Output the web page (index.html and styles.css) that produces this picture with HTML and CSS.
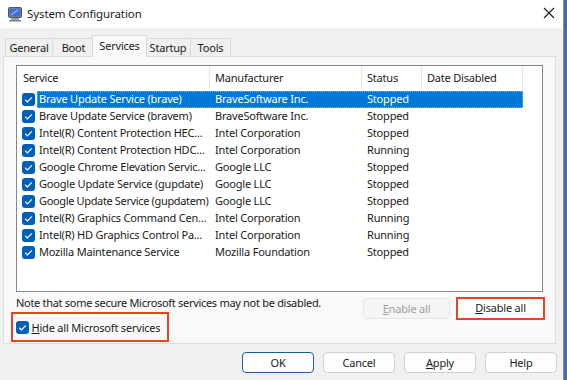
FILE: index.html
```html
<!DOCTYPE html>
<html>
<head>
<meta charset="utf-8">
<link rel="stylesheet" href="styles.css">
</head>
<body>
<div class="window">
  <div class="titlebar">
    <svg class="app-icon" width="16" height="16" viewBox="0 0 16 16">
      <rect x="1.5" y="1.5" width="13" height="10" rx="1" fill="#6f7f99" stroke="#4a5670"/>
      <rect x="3" y="3" width="10" height="7" fill="#3d6fd6"/>
      <path d="M4 9 L11 4" stroke="#c8dcff" stroke-width="1"/>
      <rect x="4" y="12" width="8" height="2.5" fill="#9aa3b0"/>
      <rect x="2" y="14" width="12" height="1.5" fill="#7a8290"/>
    </svg>
    <span class="title">System Configuration</span>
    <svg class="close" width="12" height="12" viewBox="0 0 12 12">
      <path d="M1 1 L11 11 M11 1 L1 11" stroke="#1a1a1a" stroke-width="1.1"/>
    </svg>
  </div>
  <div class="body">
    <div class="tabs">
      <div class="tab t-general">General</div>
      <div class="tab t-boot">Boot</div>
      <div class="tab t-services active">Services</div>
      <div class="tab t-startup">Startup</div>
      <div class="tab t-tools">Tools</div>
    </div>
    <div class="panel">
      <div class="listview">
        <div class="lv-header">
          <div class="h h1">Service</div>
          <div class="h h2">Manufacturer</div>
          <div class="h h3">Status</div>
          <div class="h h4">Date Disabled</div>
        </div>
        <div class="lv-row selected">
          <span class="cb"></span>
          <div class="sel"><span class="c1">Brave Update Service (brave)</span><span class="c2">BraveSoftware Inc.</span><span class="c3">Stopped</span><span class="c4"></span></div>
        </div>
        <div class="lv-row">
          <span class="cb"></span>
          <div class="sel"><span class="c1">Brave Update Service (bravem)</span><span class="c2">BraveSoftware Inc.</span><span class="c3">Stopped</span><span class="c4"></span></div>
        </div>
        <div class="lv-row">
          <span class="cb"></span>
          <div class="sel"><span class="c1">Intel(R) Content Protection HEC...</span><span class="c2">Intel Corporation</span><span class="c3">Stopped</span><span class="c4"></span></div>
        </div>
        <div class="lv-row">
          <span class="cb"></span>
          <div class="sel"><span class="c1">Intel(R) Content Protection HDC...</span><span class="c2">Intel Corporation</span><span class="c3">Running</span><span class="c4"></span></div>
        </div>
        <div class="lv-row">
          <span class="cb"></span>
          <div class="sel"><span class="c1">Google Chrome Elevation Servic...</span><span class="c2">Google LLC</span><span class="c3">Stopped</span><span class="c4"></span></div>
        </div>
        <div class="lv-row">
          <span class="cb"></span>
          <div class="sel"><span class="c1">Google Update Service (gupdate)</span><span class="c2">Google LLC</span><span class="c3">Stopped</span><span class="c4"></span></div>
        </div>
        <div class="lv-row">
          <span class="cb"></span>
          <div class="sel"><span class="c1 tight">Google Update Service (gupdatem)</span><span class="c2">Google LLC</span><span class="c3">Stopped</span><span class="c4"></span></div>
        </div>
        <div class="lv-row">
          <span class="cb"></span>
          <div class="sel"><span class="c1">Intel(R) Graphics Command Cen...</span><span class="c2">Intel Corporation</span><span class="c3">Running</span><span class="c4"></span></div>
        </div>
        <div class="lv-row">
          <span class="cb"></span>
          <div class="sel"><span class="c1">Intel(R) HD Graphics Control Pa...</span><span class="c2">Intel Corporation</span><span class="c3">Running</span><span class="c4"></span></div>
        </div>
        <div class="lv-row">
          <span class="cb"></span>
          <div class="sel"><span class="c1">Mozilla Maintenance Service</span><span class="c2">Mozilla Foundation</span><span class="c3">Stopped</span><span class="c4"></span></div>
        </div>
      </div>
      <div class="lower">
        <div class="lower-left">
          <div class="note">Note that some secure Microsoft services may not be disabled.</div>
          <div class="hide-box"><span class="cb"></span><span class="hide-label"><u>H</u>ide all Microsoft services</span></div>
        </div>
        <div class="lower-btns">
          <div class="btn disabled"><u>E</u>nable all</div>
          <div class="btn annot"><u>D</u>isable all</div>
        </div>
      </div>
    </div>
    <div class="footer">
      <div class="btn fbtn default">OK</div>
      <div class="btn fbtn">Cancel</div>
      <div class="btn fbtn"><u>A</u>pply</div>
      <div class="btn fbtn">Help</div>
    </div>
  </div>
</div>
</body>
</html>
```

FILE: styles.css
```css
* { box-sizing: border-box; }
html, body {
  margin: 0;
  padding: 0;
  width: 567px;
  height: 380px;
  overflow: hidden;
  background: #3d6ea6;
}
body {
  font-family: "Noto Sans", "Open Sans", sans-serif;
  font-size: 11px;
  letter-spacing: -0.2px;
  color: #1a1a1a;
}
.window {
  width: 564px;
  height: 380px;
  background: #f0f0f0;
  border-right: 1px solid #8a8f96;
  display: flex;
  flex-direction: column;
}
.titlebar {
  height: 28px;
  background: #ffffff;
  display: flex;
  align-items: center;
  padding-left: 7px;
  padding-right: 8px;
}
.app-icon { flex: none; margin-top: -1px; }
.title {
  margin-left: 4px;
  font-size: 11.5px;
  letter-spacing: -0.1px;
  flex: 1;
  margin-top: -2px;
}
.close { flex: none; margin-top: -2px; }
.body {
  flex: 1;
  display: flex;
  flex-direction: column;
}
.tabs {
  display: flex;
  align-items: flex-end;
  height: 28px;
  padding-left: 5px;
  padding-top: 7px;
}
.tab {
  height: 18px;
  line-height: 17px;
  text-align: center;
  background: #f0f0f0;
  border: 1px solid #dadada;
  border-bottom: none;
  margin-right: -1px;
  color: #1a1a1a;
  white-space: nowrap;
}
.t-general { width: 48px; }
.t-boot { width: 43px; }
.t-services { width: 55px; }
.t-startup { width: 46px; }
.t-tools { width: 41px; }
.tab.active {
  height: 22px;
  line-height: 19px;
  background: #f9f9f9;
  border-color: #dadada;
  margin-left: -2px;
  margin-right: -2px;
  position: relative;
  z-index: 1;
  margin-bottom: -1px;
}
.panel {
  margin-left: 3px;
  width: 553px;
  height: 288px;
  background: #f9f9f9;
  border: 1px solid #dcdcdc;
  padding: 8px 0 0 12px;
}
.listview {
  width: 527px;
  height: 227px;
  background: #ffffff;
  border: 1px solid #828790;
}
.lv-header {
  display: flex;
  height: 25px;
  border-bottom: 1px solid #ffffff;
}
.h {
  height: 24px;
  line-height: 23px;
  border-right: 1px solid #e5e5e5;
  white-space: nowrap;
}
.h1 { width: 193px; padding-left: 6px; }
.h2 { width: 152px; padding-left: 5px; }
.h3 { width: 60px; padding-left: 5px; }
.h4 { width: 101px; padding-left: 5px; }
.lv-row {
  display: flex;
  align-items: center;
  height: 17px;
}
.cb {
  flex: none;
  width: 13px;
  height: 13px;
  border-radius: 3px;
  background: #005fb8 url("data:image/svg+xml;utf8,<svg xmlns='http://www.w3.org/2000/svg' width='13' height='13'><path d='M3.2 6.8 L5.5 9 L9.8 4.3' fill='none' stroke='white' stroke-width='1.2'/></svg>") no-repeat center;
}
.lv-row .cb { margin-left: 5px; margin-right: 2px; }
.sel {
  display: flex;
  width: 486px;
  height: 17px;
  line-height: 16px;
  white-space: nowrap;
}
.c1 { flex: none; width: 173px; padding-left: 2px; }
.c1.tight { letter-spacing: -0.35px; }
.c2 { flex: none; width: 152px; padding-left: 5px; }
.c3 { flex: none; width: 60px; padding-left: 5px; }
.c4 { flex: none; width: 101px; }
.selected .sel {
  background: #0078d7;
  color: #ffffff;
  outline: 1px dotted #7fb5e6;
  outline-offset: -1px;
}
.lower {
  display: flex;
  width: 527px;
  justify-content: space-between;
  align-items: flex-start;
}
.lower-left {
  display: flex;
  flex-direction: column;
}
.note {
  margin-top: 3px;
  line-height: 16px;
  white-space: nowrap;
  letter-spacing: -0.3px;
}
.hide-box {
  margin-left: -5px;
  margin-top: 1px;
  width: 158px;
  height: 30px;
  border: 2.5px solid #e8431f;
  display: flex;
  align-items: center;
  padding-left: 2.5px;
}
.hide-label { margin-left: 3px; white-space: nowrap; }
.lower-btns {
  display: flex;
  gap: 6px;
  margin-top: 5px;
  margin-right: -2px;
}
.btn {
  height: 21px;
  line-height: 19px;
  text-align: center;
  background: #fdfdfd;
  border: 1px solid #d0d0d0;
  border-radius: 4px;
  white-space: nowrap;
}
.btn.disabled {
  width: 87px;
  margin-top: 1px;
  background: #f5f5f5;
  border-color: #e5e5e5;
  color: #a0a0a0;
}
.btn.annot {
  width: 89px;
  height: 23px;
  border: 2.5px solid #e8431f;
  border-radius: 0;
  background: #ffffff;
  line-height: 18px;
}
.footer {
  display: flex;
  gap: 9px;
  justify-content: flex-end;
  padding-right: 6px;
  padding-top: 8px;
}
.fbtn { width: 72px; }
.fbtn.default { border: 1px solid #1c5aa0; }
```
